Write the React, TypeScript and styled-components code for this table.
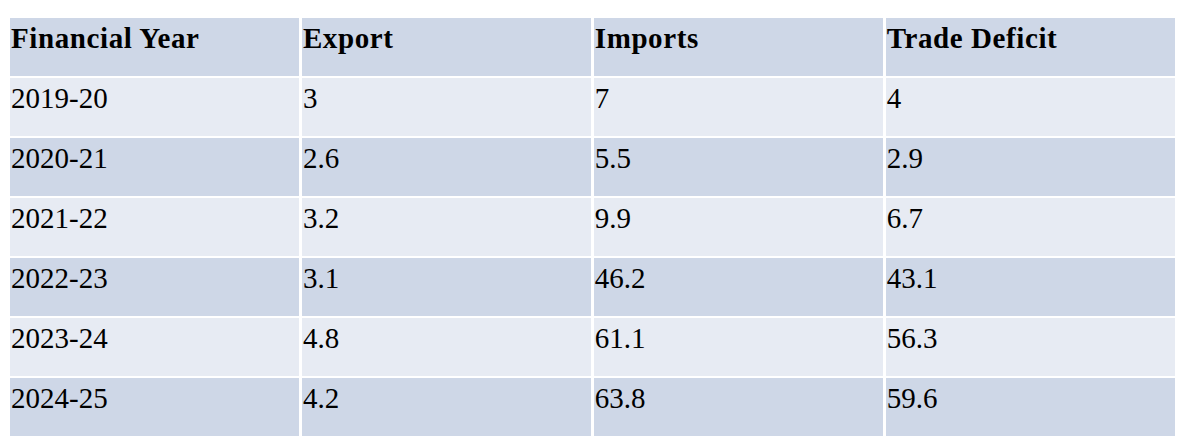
import React from 'react';
import styled, { createGlobalStyle } from 'styled-components';

const GlobalStyle = createGlobalStyle`
  html, body {
    margin: 0;
    padding: 0;
    background: #ffffff;
  }
`;

interface TradeRow {
  year: string;
  exports: string;
  imports: string;
  deficit: string;
}

const rows: TradeRow[] = [
  { year: '2019-20', exports: '3', imports: '7', deficit: '4' },
  { year: '2020-21', exports: '2.6', imports: '5.5', deficit: '2.9' },
  { year: '2021-22', exports: '3.2', imports: '9.9', deficit: '6.7' },
  { year: '2022-23', exports: '3.1', imports: '46.2', deficit: '43.1' },
  { year: '2023-24', exports: '4.8', imports: '61.1', deficit: '56.3' },
  { year: '2024-25', exports: '4.2', imports: '63.8', deficit: '59.6' },
];

const headers = ['Financial Year', 'Export', 'Imports', 'Trade Deficit'];

const App: React.FC = () => (
  <>
    <GlobalStyle />
    <Page>
      <Table>
        {headers.map((h) => (
          <Cell key={h} shade="dark" bold>
            {h}
          </Cell>
        ))}
        {rows.map((r, i) => {
          const shade = i % 2 === 0 ? 'light' : 'dark';
          return (
            <React.Fragment key={r.year}>
              <Cell shade={shade}>{r.year}</Cell>
              <Cell shade={shade}>{r.exports}</Cell>
              <Cell shade={shade}>{r.imports}</Cell>
              <Cell shade={shade}>{r.deficit}</Cell>
            </React.Fragment>
          );
        })}
      </Table>
    </Page>
  </>
);

const Page = styled.div`
  padding: 18px 10px 10px 10px;
  width: 1185px;
  box-sizing: border-box;
`;

const Table = styled.div`
  display: grid;
  grid-template-columns: repeat(4, 1fr);
  grid-auto-rows: 58px;
  column-gap: 2.5px;
  row-gap: 2px;
  width: 1165px;
`;

const Cell = styled.div<{ shade: 'light' | 'dark'; bold?: boolean }>`
  background: ${(p) => (p.shade === 'dark' ? '#ced7e7' : '#e7ebf3')};
  font-family: 'Liberation Serif', 'Times New Roman', serif;
  font-size: 29px;
  font-weight: ${(p) => (p.bold ? 700 : 400)};
  letter-spacing: ${(p) => (p.bold ? '0.6px' : '0')};
  color: #000;
  padding: 4px 0 0 1px;
  box-sizing: border-box;
  line-height: normal;
  white-space: nowrap;
`;

export default App;
